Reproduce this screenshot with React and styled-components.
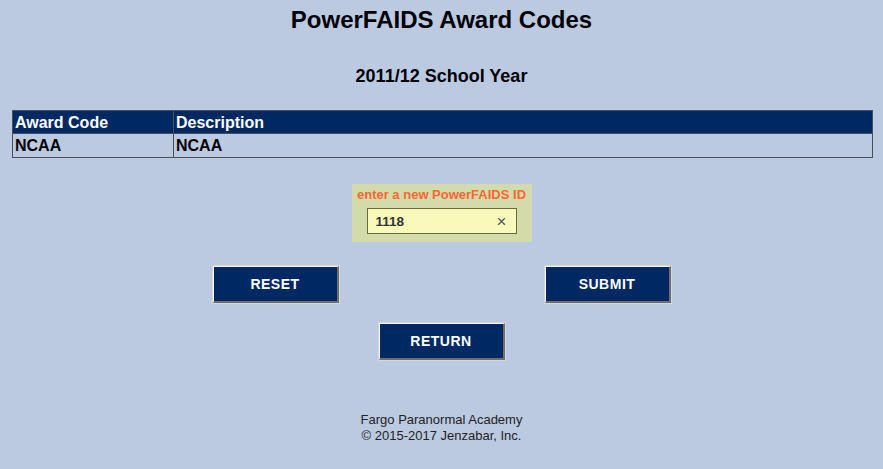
import React, { useState } from "react";
import styled, { createGlobalStyle } from "styled-components";

const GlobalStyle = createGlobalStyle`
  body {
    margin: 0;
    background: #bccae1;
    font-family: "Liberation Sans", Arial, sans-serif;
    color: #000;
  }
`;

const Page = styled.div`
  display: flex;
  flex-direction: column;
  align-items: center;
  min-height: 469px;
`;

const Title = styled.h1`
  margin: 0;
  padding-top: 6px;
  font-size: 24px;
  line-height: 27px;
  font-weight: bold;
`;

const SubTitle = styled.h2`
  margin: 0;
  padding-top: 33px;
  font-size: 18px;
  line-height: 21px;
  font-weight: bold;
`;

const TableWrap = styled.div`
  align-self: stretch;
  padding: 23px 10px 0 12px;
`;

const Table = styled.table`
  width: 100%;
  border-collapse: collapse;
  border: 1px solid #4a4d5a;
  font-size: 16px;
  font-weight: bold;
  text-align: left;
`;

const Th = styled.th`
  background: #002862;
  color: #fff;
  padding: 1px 2px 0;
  height: 21px;
  border: 1px solid #4a4d5a;
  width: ${(p) => p.$width || "auto"};
`;

const Td = styled.td`
  padding: 1px 2px 0;
  height: 22px;
  border: 1px solid #4a4d5a;
`;

const IdPanel = styled.div`
  margin-top: 26px;
  width: 180px;
  box-sizing: border-box;
  background: #d3dbab;
  padding: 3px 0 8px;
  display: flex;
  flex-direction: column;
  align-items: center;
`;

const IdLabel = styled.label`
  color: #ff6633;
  font-size: 13px;
  font-weight: bold;
  line-height: 16px;
`;

const IdField = styled.div`
  margin-top: 5px;
  width: 150px;
  height: 26px;
  box-sizing: border-box;
  border: 1px solid #6b6b3c;
  background: #f9f9bb;
  display: flex;
  align-items: center;
  padding: 0 9px 0 8px;
`;

const IdInput = styled.input`
  flex: 1;
  min-width: 0;
  border: none;
  outline: none;
  background: transparent;
  font-family: inherit;
  font-size: 13.5px;
  font-weight: bold;
  color: #333;
  padding: 0;
`;

const Clear = styled.span`
  font-size: 17px;
  line-height: 17px;
  color: #555;
  cursor: pointer;
`;

const ButtonRow = styled.div`
  margin-top: 24px;
  width: 458px;
  display: flex;
  justify-content: space-between;
`;

const Button = styled.button`
  width: 126px;
  height: 37px;
  box-sizing: border-box;
  background: #002862;
  color: #fff;
  font-family: inherit;
  font-size: 14px;
  letter-spacing: 0.5px;
  font-weight: bold;
  border-style: solid;
  border-width: 1px 2px 2px 1px;
  border-color: #f4f4f4 #6f6f6f #6f6f6f #f4f4f4;
  outline: 1px solid #d8d8d8;
  cursor: pointer;
`;

const ReturnRow = styled.div`
  margin-top: 20px;
`;

const Footer = styled.footer`
  margin-top: 52px;
  text-align: center;
  font-size: 13px;
  line-height: 16px;
  color: #222;
`;

export default function App() {
  const [pfId, setPfId] = useState("1118");

  return (
    <Page>
      <GlobalStyle />
      <Title>PowerFAIDS Award Codes</Title>
      <SubTitle>2011/12 School Year</SubTitle>

      <TableWrap>
        <Table>
          <thead>
            <tr>
              <Th $width="156px">Award Code</Th>
              <Th>Description</Th>
            </tr>
          </thead>
          <tbody>
            <tr>
              <Td>NCAA</Td>
              <Td>NCAA</Td>
            </tr>
          </tbody>
        </Table>
      </TableWrap>

      <IdPanel>
        <IdLabel htmlFor="pfid">enter a new PowerFAIDS ID</IdLabel>
        <IdField>
          <IdInput id="pfid" value={pfId} onChange={(e) => setPfId(e.target.value)} />
          <Clear onClick={() => setPfId("")}>×</Clear>
        </IdField>
      </IdPanel>

      <ButtonRow>
        <Button>RESET</Button>
        <Button>SUBMIT</Button>
      </ButtonRow>
      <ReturnRow>
        <Button>RETURN</Button>
      </ReturnRow>

      <Footer>
        Fargo Paranormal Academy
        <br />© 2015-2017 Jenzabar, Inc.
      </Footer>
    </Page>
  );
}
